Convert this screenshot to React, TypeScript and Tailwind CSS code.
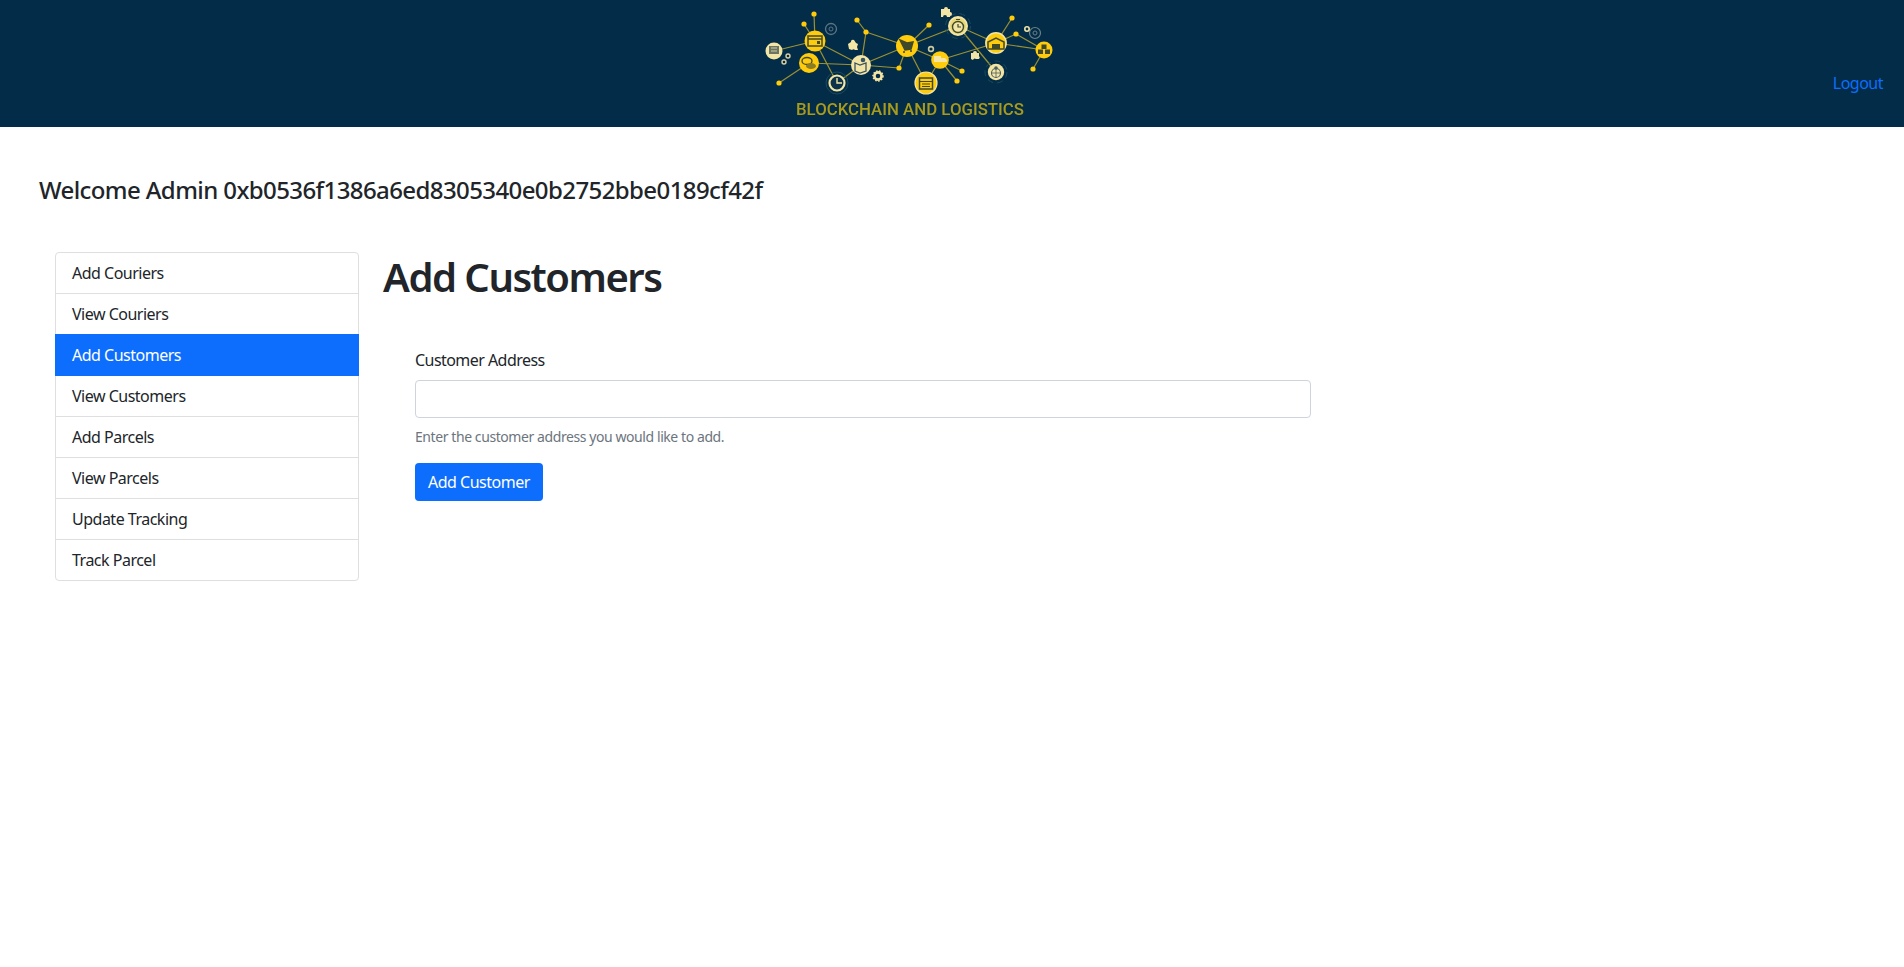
import React from "react";

const menuItems = [
  "Add Couriers",
  "View Couriers",
  "Add Customers",
  "View Customers",
  "Add Parcels",
  "View Parcels",
  "Update Tracking",
  "Track Parcel",
];

const links = [
  [34, 51, 75, 41], [75, 41, 74, 14], [75, 41, 64, 24], [75, 41, 121, 65], [75, 41, 97, 83],
  [69, 63, 121, 65], [69, 63, 39, 83], [121, 65, 126, 32], [121, 65, 97, 83], [121, 65, 159, 68],
  [121, 65, 167, 46], [126, 32, 117, 20], [126, 32, 167, 46], [167, 46, 189, 25], [167, 46, 159, 68],
  [167, 46, 200, 60], [167, 46, 186, 83], [167, 46, 218, 26], [200, 60, 222, 71], [200, 60, 217, 81],
  [200, 60, 256, 43], [218, 26, 256, 43], [218, 26, 256, 72], [256, 43, 272, 18], [256, 43, 304, 50],
  [276, 34, 304, 50], [256, 43, 276, 34], [304, 50, 293, 69], [200, 60, 186, 83],
];

const dots = [
  [74, 14], [64, 24], [39, 83], [117, 20], [126, 32], [159, 68], [189, 25],
  [222, 71], [217, 81], [272, 18], [276, 34], [293, 69],
];

const cream = "#f3e5a6";
const gold = "#fecb0a";
const ink = "#3f4a2c";

function Logo() {
  return (
    <svg width="340" height="127" viewBox="0 0 340 127" className="shrink-0">
      <defs>
        <filter id="soft" x="-5%" y="-5%" width="110%" height="110%">
          <feGaussianBlur stdDeviation="0.4" />
        </filter>
      </defs>
      <g filter="url(#soft)">
        {links.map(([a, b, c, d], i) => (
          <line key={i} x1={a} y1={b} x2={c} y2={d} stroke="#9c9230" strokeWidth="1.2" />
        ))}
        {dots.map(([x, y], i) => (
          <circle key={i} cx={x} cy={y} r="2.6" fill={gold} />
        ))}

        {/* rings and gears */}
        <circle cx="91" cy="29" r="5.5" fill="none" stroke="#5d7480" strokeWidth="1.3" />
        <circle cx="91" cy="29" r="2" fill="none" stroke="#5d7480" />
        <circle cx="295" cy="33" r="5.5" fill="none" stroke="#6c8084" strokeWidth="1.2" />
        <circle cx="295" cy="33" r="2" fill="none" stroke="#6c8084" />
        <circle cx="287" cy="29" r="2.2" fill="none" stroke={cream} strokeWidth="1.6" />
        <circle cx="138" cy="76" r="3.6" fill="none" stroke={cream} strokeWidth="2.6" />
        <circle cx="138" cy="76" r="5" fill="none" stroke={cream} strokeWidth="1.5" strokeDasharray="1.5 1.5" />
        <circle cx="191" cy="49" r="2.4" fill="none" stroke="#c9c9a0" strokeWidth="1.6" />
        <circle cx="48" cy="56" r="2" fill="none" stroke="#d8cfa0" strokeWidth="1.4" />
        <circle cx="44" cy="62" r="2" fill="none" stroke="#d8cfa0" strokeWidth="1.4" />
        <circle cx="97" cy="83" r="11" fill="none" stroke="#24505f" strokeWidth="0.8" />
        <circle cx="218" cy="26" r="12.5" fill="none" stroke="#24505f" strokeWidth="0.8" strokeDasharray="6 4" />
        <circle cx="256" cy="72" r="11" fill="none" stroke="#24505f" strokeWidth="0.8" strokeDasharray="6 4" />

        {/* puzzle pieces */}
        <path d="M201 9h3a2 2 0 0 1 4 0h2v3a2 2 0 0 1 0 4v1h-3a2 2 0 0 0-4 0h-2z" fill={cream} />
        <path d="M108 44l3-2a2 2 0 0 1 3-2l2 3 2 1-1 3 1 3h-3a2 2 0 0 0-3 0l-3-1z" fill={cream} />
        <path d="M231 53h2a2 2 0 0 1 4 0h2v3a2 2 0 0 1 0 3h-3a2 2 0 0 0-3 1l-2-1z" fill={cream} />

        {/* monitor */}
        <circle cx="34" cy="51" r="8.5" fill={cream} />
        <rect x="29" y="46" width="10" height="8" fill="#6a7466" />
        <path d="M31 48h6M31 51h6M34 54v3M31 57h6" stroke={cream} strokeWidth="0.8" />

        {/* box */}
        <circle cx="75" cy="41" r="10.5" fill={gold} />
        <rect x="68" y="36" width="14" height="10" fill="none" stroke={ink} strokeWidth="1.5" />
        <path d="M68 39h14" stroke={ink} strokeWidth="1.5" />
        <rect x="77" y="41" width="3" height="3" fill={ink} />

        {/* chat */}
        <circle cx="69" cy="63" r="10" fill={gold} />
        <ellipse cx="67" cy="61" rx="5" ry="3.5" fill="none" stroke={ink} strokeWidth="1.3" />
        <ellipse cx="71" cy="66" rx="5" ry="3" fill="#8a7d28" />

        {/* map */}
        <circle cx="121" cy="65" r="10" fill={cream} />
        <path d="M115 63l5 2 6-2v8l-6 2-5-2z" fill="none" stroke="#3a5260" strokeWidth="1.3" />
        <circle cx="123" cy="60" r="2.3" fill="#3a5260" />

        {/* clock */}
        <circle cx="97" cy="83" r="7.5" fill="#0b3149" stroke={cream} strokeWidth="2.2" />
        <path d="M97 78v5h5" fill="none" stroke={cream} strokeWidth="1.4" />

        {/* cart */}
        <circle cx="167" cy="46" r="11" fill={gold} />
        <path d="M160 40l7 3 6-1-2 7-6 1zM163 52h2M170 51h2" fill={ink} stroke={ink} strokeWidth="1.5" />

        {/* truck */}
        <circle cx="200" cy="60" r="8.8" fill={gold} />
        <path d="M194 56h7v6h-7zM201 58h4l2 2v2h-6z" fill={cream} />

        {/* calendar */}
        <circle cx="186" cy="83" r="11" fill={gold} stroke={cream} strokeWidth="1.2" />
        <rect x="179.5" y="78" width="13" height="11" fill="none" stroke={ink} strokeWidth="1.5" />
        <path d="M180 81.5h12M182 84h8M182 86.5h8" stroke={ink} strokeWidth="1.1" />

        {/* stopwatch */}
        <circle cx="218" cy="26" r="9" fill="#e8d777" stroke={cream} strokeWidth="2" />
        <circle cx="218" cy="27" r="5.5" fill={cream} stroke={ink} strokeWidth="1.4" />
        <path d="M218 24v3h3M216 19.5h4" fill="none" stroke={ink} strokeWidth="1.2" />

        {/* warehouse */}
        <circle cx="256" cy="43" r="10.2" fill={gold} stroke={cream} strokeWidth="1.4" />
        <path d="M248 49v-7l8-4 8 4v7z" fill="none" stroke={ink} strokeWidth="1.5" />
        <rect x="252" y="44" width="8" height="5" fill={ink} />

        {/* globe */}
        <circle cx="256" cy="72" r="8.2" fill={cream} />
        <circle cx="256" cy="73" r="4.5" fill="none" stroke="#4d5f5e" strokeWidth="1.1" />
        <path d="M251.5 73h9M256 68.5v9" stroke="#4d5f5e" strokeWidth="0.8" />
        <circle cx="256" cy="68" r="1.8" fill="#4d5f5e" />

        {/* boxes */}
        <circle cx="304" cy="50" r="8.5" fill={gold} />
        <path d="M301.5 44.5h5v4.5h-5zM298 49.5h5V54h-5zM305 49.5h5V54h-5z" fill={ink} />

        <text x="56" y="115" textLength="228" lengthAdjust="spacingAndGlyphs" fill="#a89a1c" fontSize="16.5" fontWeight="500" className="font-['Roboto',sans-serif]">
          BLOCKCHAIN AND LOGISTICS
        </text>
      </g>
    </svg>
  );
}

export default function App() {
  return (
    <div className="min-h-[967px] bg-white text-[16px] leading-[24px] text-[#212529] font-['Noto_Sans',sans-serif]">
      <header className="flex h-[127px] bg-[#032c48] pl-[740px] pr-[21px]">
        <Logo />
        <a href="#" className="ml-auto pt-[71px] text-[#0d6efd] tracking-[-0.5px]">Logout</a>
      </header>

      <h2 className="mt-[48px] ml-[39px] text-[24px] leading-[29px] font-medium tracking-[-0.6px]">
        Welcome Admin 0xb0536f1386a6ed8305340e0b2752bbe0189cf42f
      </h2>

      <div className="mt-[48px] flex items-start pl-[55px]">
        <ul className="w-[304px] shrink-0 rounded-[4px] border border-[#dfdfdf]">
          {menuItems.map((item) => (
            <li
              key={item}
              className={
                item === "Add Customers"
                  ? "-mx-px -mt-px h-[42px] px-[17px] py-[9px] bg-[#0d6efd] text-white tracking-[-0.5px]"
                  : "h-[41px] px-[16px] py-[8px] border-b border-[#dfdfdf] last:h-[40px] last:border-b-0 tracking-[-0.5px]"
              }
            >
              {item}
            </li>
          ))}
        </ul>

        <main className="ml-[24px] flex-1">
          <h1 className="mt-[1px] text-[40px] leading-[48px] font-semibold tracking-[-1.5px]">Add Customers</h1>
          <form className="mt-[47px] ml-[32px] w-[896px]">
            <label className="block tracking-[-0.55px]">Customer Address</label>
            <input
              type="text"
              className="mt-[8px] block h-[38px] w-full rounded-[4px] border border-[#ced4da] bg-white px-[12px]"
            />
            <p className="mt-[8px] text-[14px] leading-[21px] text-[#6c757d] tracking-[-0.42px]">
              Enter the customer address you would like to add.
            </p>
            <button
              type="button"
              className="mt-[16px] h-[38px] rounded-[4px] bg-[#0d6efd] px-[13px] text-white tracking-[-0.5px]"
            >
              Add Customer
            </button>
          </form>
        </main>
      </div>
    </div>
  );
}
